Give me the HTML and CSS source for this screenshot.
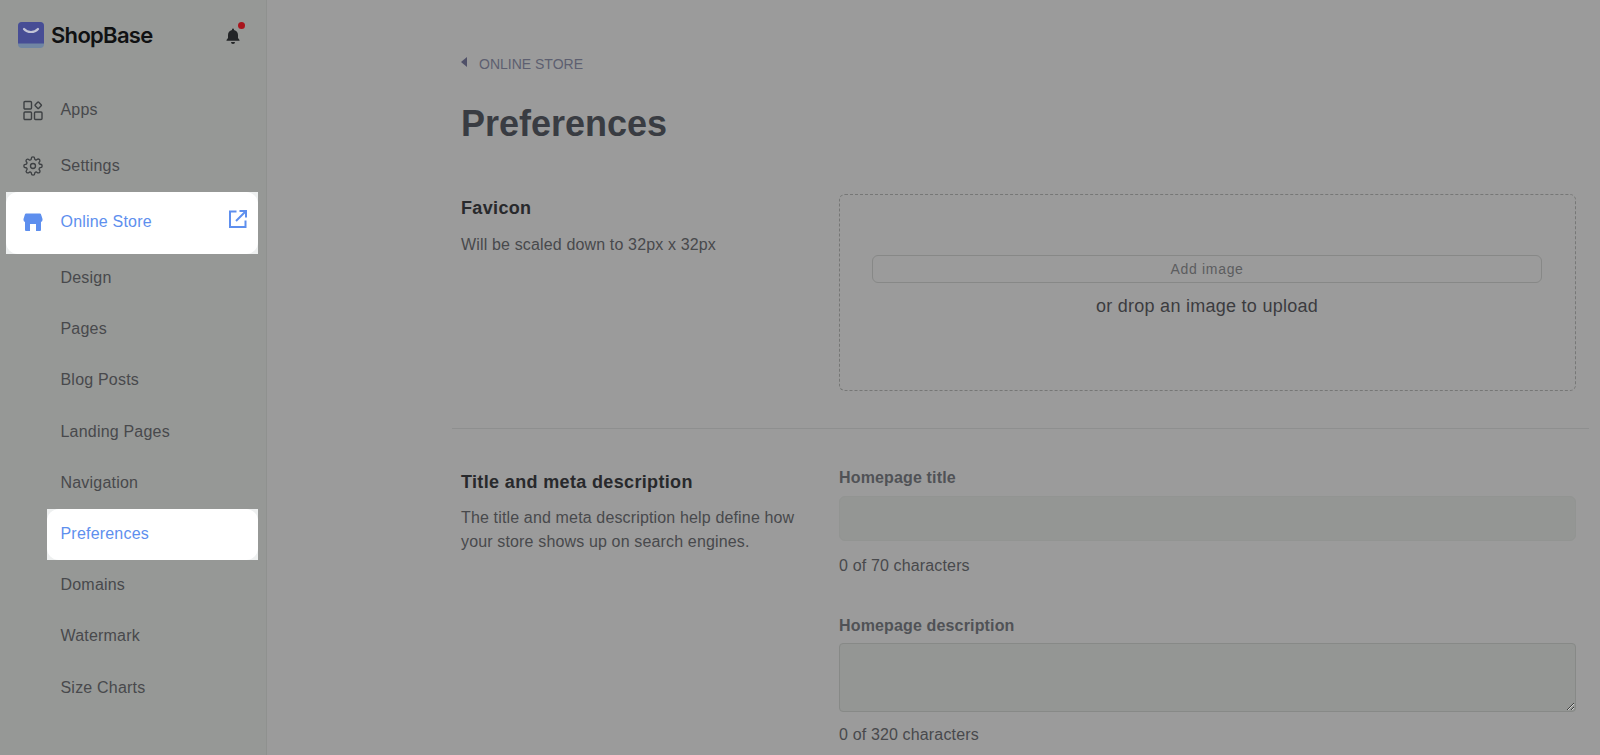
FILE: index.html
```html
<!DOCTYPE html>
<html lang="en">
<head>
<meta charset="utf-8">
<title>Preferences</title>
<link rel="stylesheet" href="styles.css">
</head>
<body>
<div class="app">
  <aside class="sidebar">
    <div class="brand">
      <div class="logo">
        <svg class="logo-mark" width="26" height="26" viewBox="0 0 26 26"><path d="M4 0h18a4 4 0 0 1 4 4v18a4 4 0 0 1-4 4H4a4 4 0 0 1-4-4V4a4 4 0 0 1 4-4z" fill="#7186a3"/><path d="M4 0h18a4 4 0 0 1 4 4v17.500H0V4a4 4 0 0 1 4-4z" fill="#474d95"/><path d="M6 7c3.500 4 10.500 4 14 0" fill="none" stroke="#c3c4d6" stroke-width="2.200" stroke-linecap="round"/></svg>
        <span class="logo-text">ShopBase</span>
      </div>
      <div class="bell">
        <svg width="16" height="18" viewBox="0 0 16 18"><path d="M8 1.500a1 1 0 0 1 1 1v.5c2.500.5 4 2.500 4 5v3l1.500 2v.8h-13V13l1.500-2V8c0-2.500 1.500-4.500 4-5v-.5a1 1 0 0 1 1-1zM6 15h4a2 2 0 0 1-4 0z" fill="#232527"/></svg>
        <span class="dot"></span>
      </div>
    </div>
    <nav class="nav">
      <a class="nav-main">
        <svg class="nav-icon" width="22" height="22" viewBox="0 0 22 22" fill="none" stroke="#3d4043" stroke-width="1.400"><rect x="2" y="2.500" width="7.500" height="7.500" rx="1"/><rect x="2" y="13" width="7.500" height="7.500" rx="1"/><rect x="12.500" y="13" width="7.500" height="7.500" rx="1"/><rect x="13.700" y="3.700" width="5" height="5" rx=".8" transform="rotate(45 16.200 6.200)"/></svg>
        <span>Apps</span>
      </a>
      <a class="nav-main">
        <span class="icon-box"><svg width="20" height="20" viewBox="0 0 24 24" fill="none" stroke="#3d4043" stroke-width="1.600" stroke-linecap="round" stroke-linejoin="round"><circle cx="12" cy="12" r="3"/><path d="M19.400 15a1.650 1.650 0 0 0 .33 1.820l.06.06a2 2 0 1 1-2.830 2.830l-.06-.06a1.650 1.650 0 0 0-2.820 1.170V21a2 2 0 1 1-4 0v-.09A1.650 1.650 0 0 0 7.270 19.700l-.06.06a2 2 0 1 1-2.830-2.830l.06-.06a1.650 1.650 0 0 0-1.170-2.820H3a2 2 0 1 1 0-4h.09A1.650 1.650 0 0 0 4.300 7.270l-.06-.06a2 2 0 1 1 2.830-2.830l.06.06A1.650 1.650 0 0 0 9.950 3.270V3a2 2 0 1 1 4 0v.09a1.650 1.650 0 0 0 2.820 1.170l.06-.06a2 2 0 1 1 2.830 2.830l-.06.06a1.650 1.650 0 0 0 1.170 2.820H21a2 2 0 1 1 0 4h-.09a1.650 1.650 0 0 0-1.510 1.090z"/></svg></span>
        <span>Settings</span>
      </a>
      <div class="spot spot-main">
        <a class="nav-main nav-active">
          <svg class="nav-icon" width="22" height="22" viewBox="0 0 22 22"><path d="M4 2.500h14a1 1 0 0 1 .9.600L20.500 8H1.500l1.600-4.900a1 1 0 0 1 .9-.600z" fill="#5e8fee"/><path d="M1.500 8h19v1a2 2 0 0 1-1.500 1.900V19a1 1 0 0 1-1 1H4a1 1 0 0 1-1-1v-8.100A2 2 0 0 1 1.500 9z" fill="#5e8fee"/><path d="M8 13h6v7H8z" fill="#fff"/></svg>
          <span>Online Store</span>
          <svg class="ext" width="18" height="18" viewBox="0 0 18 18" fill="none" stroke="#5e8fee" stroke-width="2"><path d="M7.500 1.500H1V17h15.500v-6.500"/><path d="M7 11L16.500 1.500"/><path d="M10.500 1H17V7.500"/></svg>
        </a>
      </div>
      <a class="nav-sub">Design</a>
      <a class="nav-sub">Pages</a>
      <a class="nav-sub">Blog Posts</a>
      <a class="nav-sub">Landing Pages</a>
      <a class="nav-sub">Navigation</a>
      <div class="spot spot-sub"><a class="nav-sub nav-active">Preferences</a></div>
      <a class="nav-sub">Domains</a>
      <a class="nav-sub">Watermark</a>
      <a class="nav-sub">Size Charts</a>
    </nav>
  </aside>
  <main class="main">
    <div class="breadcrumb"><span class="caret"></span><span>ONLINE STORE</span></div>
    <h1 class="title">Preferences</h1>
    <section class="section section-favicon">
      <div class="intro">
        <h2>Favicon</h2>
        <p>Will be scaled down to 32px x 32px</p>
      </div>
      <div class="field-col">
        <div class="dropzone">
          <button class="add-btn" type="button">Add image</button>
          <div class="drop-text">or drop an image to upload</div>
        </div>
      </div>
    </section>
    <section class="section section-meta">
      <div class="intro">
        <h2>Title and meta description</h2>
        <p>The title and meta description help define how your store shows up on search engines.</p>
      </div>
      <div class="field-col fields">
        <label class="label">Homepage title</label>
        <input class="input" type="text">
        <div class="count count-first">0 of 70 characters</div>
        <label class="label">Homepage description</label>
        <textarea class="textarea"></textarea>
        <div class="count count-last">0 of 320 characters</div>
      </div>
    </section>
  </main>
</div>
</body>
</html>
```
FILE: styles.css
```css
* { box-sizing: border-box; }
html, body { margin: 0; height: 100%; overflow: hidden; }
body { font-family: "Liberation Sans", Arial, sans-serif; background: #9b9b9b; color: #48494c; }
.app { display: flex; height: 755px; overflow: hidden; }

.sidebar { flex: 0 0 267px; width: 267px; background: #969896; border-right: 1px solid #8f918f; padding: 0 8px 0 6px; }
.brand { display: flex; align-items: center; justify-content: space-between; height: 70px; padding: 0 13px 0 12px; }
.logo { display: flex; align-items: center; gap: 7px; }
.logo-mark { display: block; }
.logo-text { font-family: Inter, "Liberation Sans", sans-serif; font-weight: 600; font-size: 22px; letter-spacing: -.7px; color: #101112; }
.bell { position: relative; width: 18px; height: 20px; margin-right: 2px; margin-top: -1px; }
.bell svg { display: block; margin-top: 2px; }
.dot { position: absolute; top: -3px; right: -2px; width: 7px; height: 7px; border-radius: 50%; background: #a8141c; }

.nav { display: flex; flex-direction: column; margin-top: 12px; }
.nav a { display: flex; align-items: center; font-size: 16px; color: #48494c; letter-spacing: .2px; }
.nav-main { height: 56px; gap: 16.500px; padding-left: 16px; padding-right: 11px; }
.nav-icon { flex: none; }
.icon-box { flex: none; width: 22px; height: 22px; display: flex; align-items: center; justify-content: center; }
.nav-sub { height: 51.300px; padding-left: 54.500px; }
.spot { background: #eef0f0; }
.spot-main { height: 62px; margin-top: -2px; margin-bottom: -2px; }
.spot-main .nav-main { padding-bottom: 2px; }
.spot-sub { margin: 1px 0 -1px 40.500px; height: 51px; }
.spot a { background: #fff; border-radius: 12px; height: 100%; color: #5e8fee; }
.spot-sub .nav-sub { padding-left: 14px; padding-bottom: 2px; }
.ext { margin-left: auto; margin-top: -6px; }

.main { flex: 1; padding: 0 24px 0 194px; min-width: 0; }
.breadcrumb { display: flex; align-items: center; gap: 12px; padding-top: 55px; font-size: 14px; color: #5d5f70; height: 72px; }
.caret { width: 0; height: 0; border-top: 5.500px solid transparent; border-bottom: 5.500px solid transparent; border-right: 6px solid #4f5068; margin-top: -3px; }
.title { margin: 0; padding-top: 25px; height: 113px; font-size: 36px; line-height: 54px; font-weight: 700; color: #393c42; }

.section { display: flex; margin: 0 -24px 0 -9px; padding: 0 24px 0 9px; }
.section-favicon { height: 244px; padding-top: 9px; border-bottom: 1px solid #8e8f8f; margin-right: -13px; padding-right: 0; }
.section-meta { padding-top: 38px; }
.intro { flex: 0 0 378px; width: 378px; }
.intro h2 { margin: 0; font-size: 18px; line-height: 26px; font-weight: 700; letter-spacing: .35px; color: #28292c; }
.intro p { margin: 12px 0 0; max-width: 345px; font-size: 16px; line-height: 24px; letter-spacing: .15px; color: #48494c; }
.section-favicon .intro h2 { margin-top: 1px; }
.section-meta .intro h2 { margin-top: 2px; }
.section-meta .intro p { margin-top: 11px; }
.field-col { flex: 0 0 737px; width: 737px; display: flex; flex-direction: column; }
.fields { margin-top: -1px; }

.dropzone { height: 197px; border: 1px dashed #767776; border-radius: 6px; display: flex; flex-direction: column; align-items: stretch; padding: 60px 33px 0 32px; }
.add-btn { height: 28px; padding: 0; background: transparent; border: 1px solid #878887; border-radius: 6px; font-family: "Liberation Sans", sans-serif; font-size: 14px; letter-spacing: .7px; color: #5c5d5f; }
.drop-text { margin-top: 10px; text-align: center; font-size: 18px; line-height: 26px; letter-spacing: .27px; color: #3b3c3f; }

.label { font-size: 16px; font-weight: 700; line-height: 24px; letter-spacing: .15px; color: #505256; }
.input { height: 45px; margin-top: 6px; background: #949694; border: 1px solid #929492; border-radius: 6px; display: block; width: 100%; }
.textarea { height: 69px; margin-top: 5px; background: #949694; border: 1px solid #878987; border-radius: 4px; display: block; width: 100%; padding: 0; }
.count { font-size: 16px; line-height: 24px; letter-spacing: .15px; color: #48494c; }
.count-first { margin-top: 13px; margin-bottom: 36px; }
.count-last { margin-top: 11px; }
```
